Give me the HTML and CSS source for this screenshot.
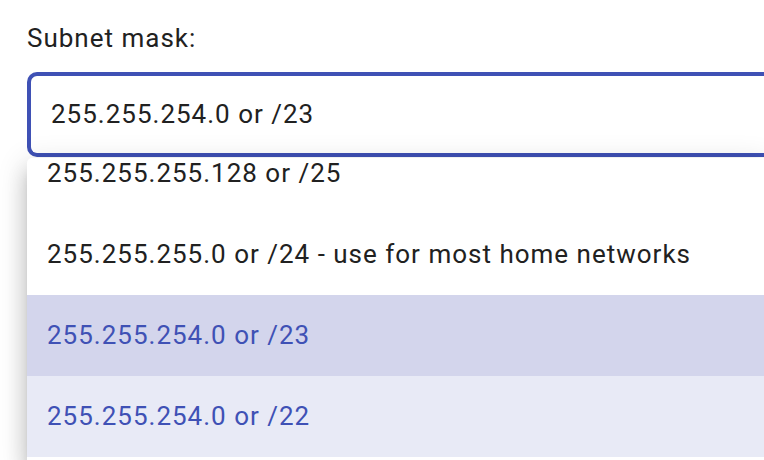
FILE: index.html
```html
<!DOCTYPE html>
<html lang="en">
<head>
<meta charset="utf-8">
<title>Subnet mask</title>
<link rel="stylesheet" href="styles.css">
</head>
<body>
<div class="field">
  <label class="label">Subnet mask:</label>
  <div class="select">255.255.254.0 or /23</div>
  <div class="menu">
    <ul class="options">
      <li class="option">255.255.255.128 or /25</li>
      <li class="option">255.255.255.0 or /24 - use for most home networks</li>
      <li class="option selected">255.255.254.0 or /23</li>
      <li class="option hovered">255.255.254.0 or /22</li>
    </ul>
  </div>
</div>
</body>
</html>
```
FILE: styles.css
```css
html, body {
  margin: 0;
  padding: 0;
  overflow: hidden;
  background: #ffffff;
  height: 100%;
}
body {
  font-family: Roboto, "Liberation Sans", sans-serif;
  color: #212121;
  letter-spacing: 1px;
}
.field {
  padding: 23px 0 0 27px;
  width: 737px;
}
.label {
  display: block;
  font-size: 26px;
  line-height: 30px;
  color: #212121;
}
.select {
  position: relative;
  z-index: 1;
  margin-top: 19px;
  height: 77px;
  border: 4px solid #3f51b5;
  border-right: none;
  border-radius: 10px 0 0 10px;
  padding-left: 20px;
  font-size: 26px;
  line-height: 77px;
  color: #212121;
  background: #ffffff;
}
.menu {
  position: relative;
  z-index: 2;
  margin-top: 1px;
  height: 302px;
  overflow: hidden;
  background: #ffffff;
  border-radius: 5px 0 0 0;
  box-shadow: 0 10px 10px -6px rgba(0,0,0,.2), 0 16px 20px 2px rgba(0,0,0,.14), 0 6px 28px 4px rgba(0,0,0,.12);
}
.options {
  list-style: none;
  margin: -25px 0 0 0;
  padding: 0;
}
.option {
  height: 81px;
  line-height: 81px;
  padding-left: 20px;
  font-size: 26px;
  color: #212121;
  white-space: nowrap;
}
.option.selected {
  background: #d3d5ec;
  color: #3f51b5;
}
.option.hovered {
  background: #e8eaf6;
  color: #3f51b5;
}
```
